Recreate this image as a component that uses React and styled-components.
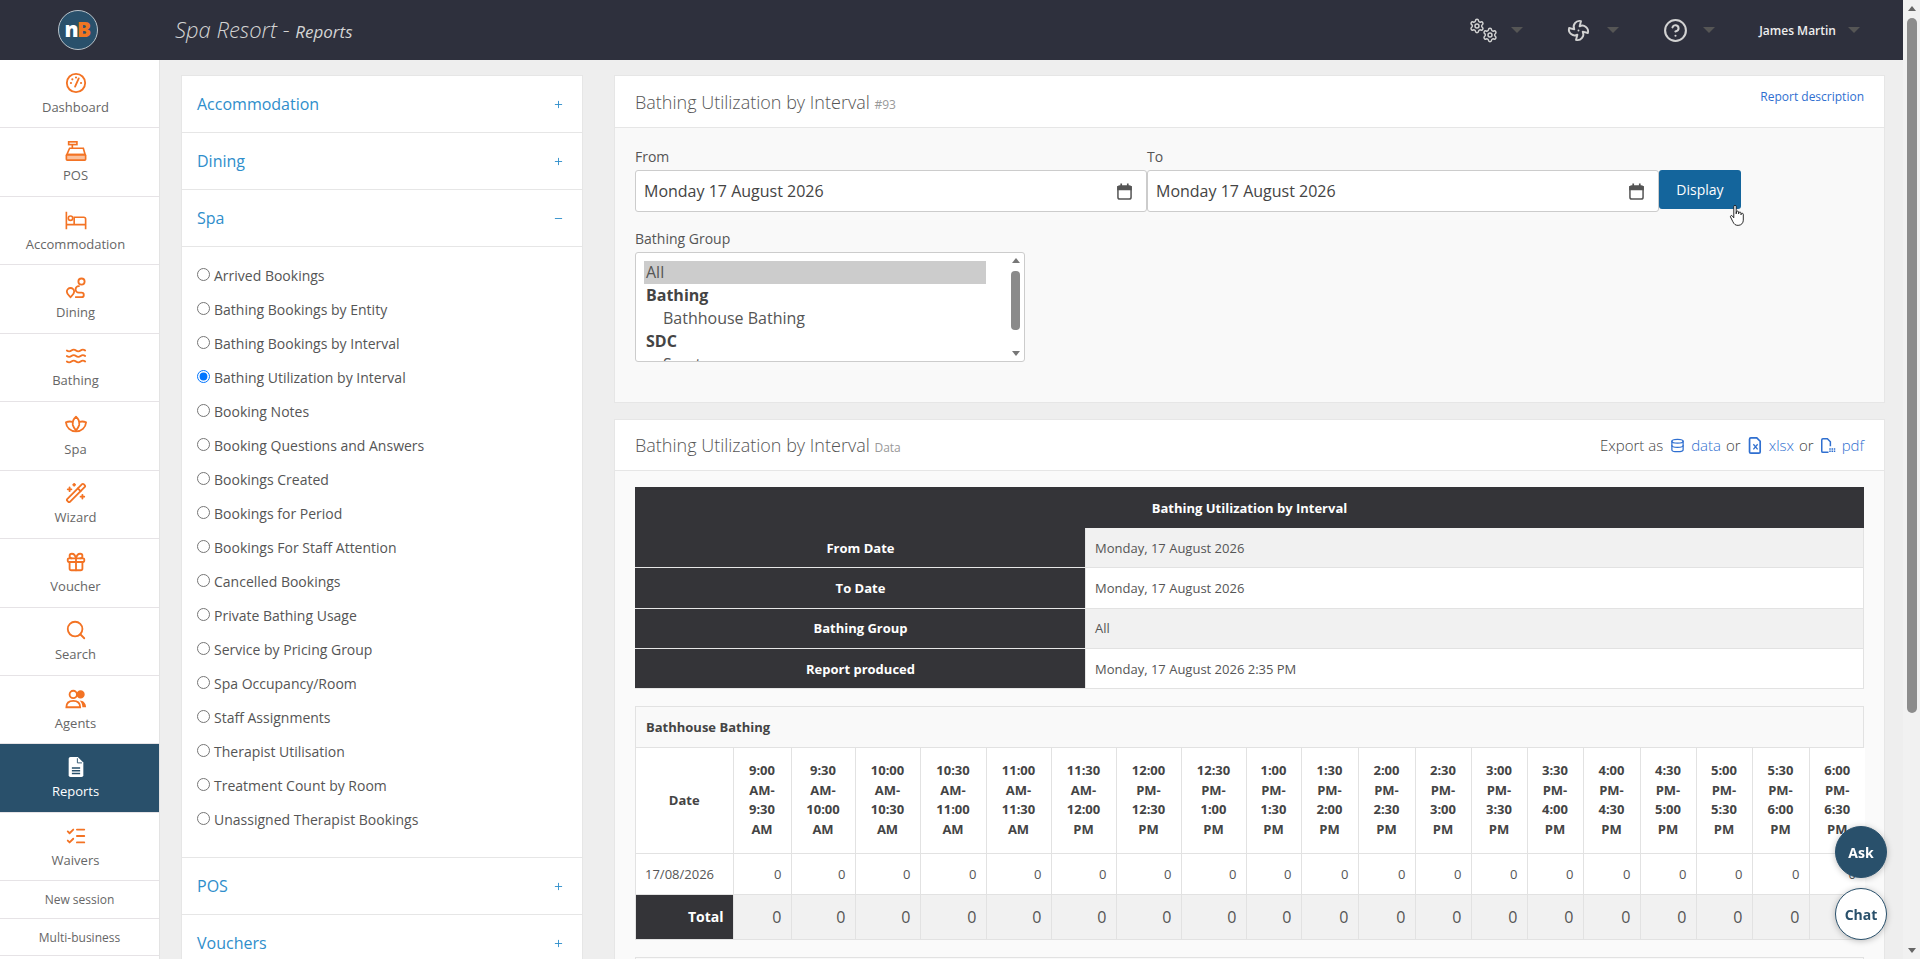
import React from 'react';
import styled, { createGlobalStyle } from 'styled-components';
import {
  Settings, Fan, CircleHelp, Waves, WandSparkles, Gift, Search, ListChecks, Database,
  ChevronUp, Plus, Minus,
} from 'lucide-react';

const GlobalStyle = createGlobalStyle`
  html, body { margin: 0; height: 100%; overflow: hidden; }
  body { font-family: "Open Sans", "Liberation Sans", sans-serif; font-size: 14px; color: #555; background: #eee; }
  #root { height: 100%; }
  * { box-sizing: border-box; }
`;

const GaugeIcon = () => (
  <svg viewBox="0 0 24 24" fill="none" stroke="currentColor" strokeWidth="2" strokeLinecap="round">
    <circle cx="12" cy="12" r="10" />
    <path d="M11 16l4-9" />
    <path d="M6.5 12h.01M8 8h.01M12 6h.01M17.5 12h.01" strokeWidth="2.4" />
  </svg>
);
const PosIcon = () => (
  <svg viewBox="0 0 24 24" fill="none" stroke="currentColor" strokeWidth="1.8">
    <rect x="4" y="2" width="9" height="3" />
    <path d="M8 5v4M5 9h15l2 7H2z" />
    <rect x="1.5" y="16" width="21" height="6" rx="1" fill="currentColor" fillOpacity=".45" />
    <path d="M7 12h.01M10 12h.01M13 12h.01M16 12h.01" strokeWidth="2" />
  </svg>
);
const BedIcon = () => (
  <svg viewBox="0 0 24 24" fill="none" stroke="currentColor" strokeWidth="1.8">
    <path d="M1.5 3v19M1.5 17h21M22.5 22V11a2 2 0 0 0-2-2H10v8" />
    <circle cx="6" cy="10" r="2.4" />
  </svg>
);
const RouteIcon = () => (
  <svg viewBox="0 0 24 24" fill="none" stroke="currentColor" strokeWidth="2">
    <path d="M6 22c-2-2-4-3.500-4-6a4 4 0 0 1 8 0c0 2.500-2 4-4 6z" />
    <circle cx="18" cy="5" r="3.400" />
    <path d="M16 10h-1a3.500 3.500 0 0 0 0 7h3a2.200 2.200 0 0 1 0 5h-7" />
  </svg>
);
const LotusIcon = () => (
  <svg viewBox="0 0 24 24" fill="none" stroke="currentColor" strokeWidth="2" strokeLinejoin="round">
    <path d="M12 3c3 2.500 4 5.500 3.500 9-.5 2-2 4-3.500 6-1.500-2-3-4-3.500-6C8 8.500 9 5.500 12 3z" />
    <path d="M8 8.500C6 8 3.500 8 1 9c.5 6 5 10 11 10s10.500-4 11-10c-2.500-1-5-1-7-.5" />
  </svg>
);
const AgentsIcon = () => (
  <svg viewBox="0 0 24 24" fill="none" stroke="currentColor" strokeWidth="2">
    <circle cx="9" cy="7" r="4" />
    <circle cx="17" cy="7" r="3.500" fill="currentColor" />
    <path d="M1.500 21c0-4.500 3-7 7.500-7s7.500 2.500 7.500 7z" />
    <path d="M16 13.500c4 0 7 3 7 7.500h-4c0-3-1-5.500-3-7.500z" fill="currentColor" stroke="none" />
  </svg>
);
const ReportIcon = () => (
  <svg viewBox="0 0 24 24" fill="none">
    <path d="M6 1h8l6 6v14a2 2 0 0 1-2 2H6a2 2 0 0 1-2-2V3a2 2 0 0 1 2-2z" fill="#fff" />
    <path d="M7.500 13h9M7.500 16h9M7.500 19h9" stroke="#29506b" strokeWidth="1.700" />
    <path d="M13.500 2.500v5h5" stroke="#29506b" strokeWidth="1" />
  </svg>
);
const CalendarIcon = () => (
  <svg viewBox="0 0 16 18" fill="none" stroke="#555" strokeWidth="1.600">
    <rect x="1" y="3" width="14" height="14" rx="2" />
    <path d="M1 3.800h14v3H1z" fill="#555" />
    <path d="M4.500 .5v3M11.500 .5v3" strokeWidth="1.800" />
  </svg>
);
const XlsxIcon = () => (
  <svg viewBox="0 0 16 20" fill="none" stroke="currentColor" strokeWidth="1.700">
    <path d="M2.500 1h7l4 4v12.500a1.500 1.500 0 0 1-1.500 1.500H2.500A1.500 1.500 0 0 1 1 17.500v-15A1.500 1.500 0 0 1 2.500 1z" />
    <path d="M5.500 8.500l5 6M10.500 8.500l-5 6" strokeWidth="1.500" />
  </svg>
);
const PdfIcon = () => (
  <svg viewBox="0 0 20 20" fill="none" stroke="currentColor" strokeWidth="1.700">
    <path d="M10 19H2.500A1.500 1.500 0 0 1 1 17.500v-15A1.500 1.500 0 0 1 2.500 1h6l4 4v6" />
    <path d="M11 14.500h8M11 17.500h8" strokeWidth="2" strokeDasharray="2 1" />
  </svg>
);
const HandCursor = () => (
  <svg viewBox="0 0 20 28" fill="#fff" stroke="#111" strokeWidth="1.100" strokeLinejoin="round">
    <path d="M6 2a1.500 1.500 0 0 1 3 0v9l.3-2.500a1.400 1.400 0 0 1 2.700.5v2l.3-1.300a1.400 1.400 0 0 1 2.700.5v2l.4-1a1.300 1.300 0 0 1 2.500.5v7.300c0 3.500-2.500 6.500-6.500 6.500-3.500 0-5-1.500-6.500-4.500l-3-6c-.7-1.500 1.300-2.500 2.300-1.300L6 16z" />
  </svg>
);

const nav = [
  { label: 'Dashboard', icon: <GaugeIcon /> },
  { label: 'POS', icon: <PosIcon /> },
  { label: 'Accommodation', icon: <BedIcon /> },
  { label: 'Dining', icon: <RouteIcon /> },
  { label: 'Bathing', icon: <Waves /> },
  { label: 'Spa', icon: <LotusIcon /> },
  { label: 'Wizard', icon: <WandSparkles /> },
  { label: 'Voucher', icon: <Gift /> },
  { label: 'Search', icon: <Search /> },
  { label: 'Agents', icon: <AgentsIcon /> },
  { label: 'Reports', icon: <ReportIcon />, active: true },
  { label: 'Waivers', icon: <ListChecks /> },
];

const spaReports = [
  'Arrived Bookings', 'Bathing Bookings by Entity', 'Bathing Bookings by Interval',
  'Bathing Utilization by Interval', 'Booking Notes', 'Booking Questions and Answers',
  'Bookings Created', 'Bookings for Period', 'Bookings For Staff Attention', 'Cancelled Bookings',
  'Private Bathing Usage', 'Service by Pricing Group', 'Spa Occupancy/Room', 'Staff Assignments',
  'Therapist Utilisation', 'Treatment Count by Room', 'Unassigned Therapist Bookings',
];

const summary = [
  ['From Date', 'Monday, 17 August 2026'],
  ['To Date', 'Monday, 17 August 2026'],
  ['Bathing Group', 'All'],
  ['Report produced', 'Monday, 17 August 2026 2:35 PM'],
];

const intervals = [
  ['9:00 AM', '9:30 AM', 58], ['9:30 AM', '10:00 AM', 64], ['10:00 AM', '10:30 AM', 65],
  ['10:30 AM', '11:00 AM', 66], ['11:00 AM', '11:30 AM', 65], ['11:30 AM', '12:00 PM', 65],
  ['12:00 PM', '12:30 PM', 65], ['12:30 PM', '1:00 PM', 65], ['1:00 PM', '1:30 PM', 55],
  ['1:30 PM', '2:00 PM', 57], ['2:00 PM', '2:30 PM', 57], ['2:30 PM', '3:00 PM', 56],
  ['3:00 PM', '3:30 PM', 56], ['3:30 PM', '4:00 PM', 56], ['4:00 PM', '4:30 PM', 57],
  ['4:30 PM', '5:00 PM', 56], ['5:00 PM', '5:30 PM', 56], ['5:30 PM', '6:00 PM', 57],
  ['6:00 PM', '6:30 PM', 56],
];

const App = () => (
  <Shell>
    <GlobalStyle />
    <Page>
      <Header>
        <LogoCell>
          <Logo viewBox="0 0 40 40">
            <circle cx="20" cy="20" r="19.500" fill="#29506b" stroke="#b9c3ca" strokeWidth="1" />
            <text x="6.500" y="27" fontFamily="Open Sans" fontWeight="800" fontSize="21" fill="#fff">n</text>
            <text x="19" y="27" fontFamily="Open Sans" fontWeight="800" fontSize="21" fill="#ef7622">B</text>
          </Logo>
        </LogoCell>
        <Title>Spa Resort - <small>Reports</small></Title>
        <HeaderTools>
          <Tool $gap={13}><Gears><Settings /><Settings /></Gears><Caret /></Tool>
          <Tool $gap={17}><FanIcon /><Caret /></Tool>
          <Tool $gap={15}><HelpIcon /><Caret /></Tool>
          <Tool $gap={12}><UserName>James Martin</UserName><Caret /></Tool>
        </HeaderTools>
      </Header>
      <Body>
        <Sidebar>
          {nav.map((item) => (
            <NavItem key={item.label} $active={item.active}>
              <NavIcon $active={item.active}>{item.icon}</NavIcon>
              {item.label}
            </NavItem>
          ))}
          <NavLink>New session</NavLink>
          <NavLink>Multi-business</NavLink>
        </Sidebar>
        <Main>
          <ReportMenu>
            <MenuHead>Accommodation<Plus /></MenuHead>
            <MenuHead>Dining<Plus /></MenuHead>
            <MenuHead>Spa<Minus /></MenuHead>
            <RadioList>
              {spaReports.map((name) => (
                <RadioRow key={name}>
                  <input type="radio" name="report" defaultChecked={name === 'Bathing Utilization by Interval'} />
                  {name}
                </RadioRow>
              ))}
            </RadioList>
            <MenuHead>POS<Plus /></MenuHead>
            <MenuHead>Vouchers<Plus /></MenuHead>
          </ReportMenu>
          <Content>
            <Panel>
              <PanelHead>
                <PanelTitle>Bathing Utilization by Interval <small>#93</small></PanelTitle>
                <DescLink>Report description</DescLink>
              </PanelHead>
              <FilterBody>
                <DateRow>
                  <DateField>
                    <FieldLabel>From</FieldLabel>
                    <DateInput>Monday 17 August 2026<CalendarIcon /></DateInput>
                  </DateField>
                  <DateField>
                    <FieldLabel>To</FieldLabel>
                    <DateInput>Monday 17 August 2026<CalendarIcon /></DateInput>
                  </DateField>
                  <DisplayButton>
                    Display
                    <CursorWrap><HandCursor /></CursorWrap>
                  </DisplayButton>
                </DateRow>
                <FieldLabel>Bathing Group</FieldLabel>
                <ListBox>
                  <ListOptions>
                    <Option $selected>All</Option>
                    <Option $group>Bathing</Option>
                    <Option $child>Bathhouse Bathing</Option>
                    <Option $group>SDC</Option>
                    <Option $child>Spa-to-go</Option>
                  </ListOptions>
                  <MiniScroll>
                    <ChevronFill />
                    <MiniThumb />
                    <ChevronFill $down />
                  </MiniScroll>
                </ListBox>
              </FilterBody>
            </Panel>
            <Panel>
              <PanelHead $tall>
                <PanelTitle>Bathing Utilization by Interval <small>Data</small></PanelTitle>
                <ExportBar>
                  Export as <ExportLink><Database />data</ExportLink> or{' '}
                  <ExportLink><XlsxIcon />xlsx</ExportLink> or{' '}
                  <ExportLink><PdfIcon />pdf</ExportLink>
                </ExportBar>
              </PanelHead>
              <DataBody>
                <SummaryTable>
                  <thead>
                    <tr><SummaryTitle colSpan={2}>Bathing Utilization by Interval</SummaryTitle></tr>
                  </thead>
                  <tbody>
                    {summary.map(([key, value], i) => (
                      <tr key={key}>
                        <SummaryKey>{key}</SummaryKey>
                        <SummaryValue $odd={i % 2 === 0}>{value}</SummaryValue>
                      </tr>
                    ))}
                  </tbody>
                </SummaryTable>
                <GridPanel>
                  <GridHead>Bathhouse Bathing</GridHead>
                  <GridTable>
                    <colgroup>
                      <col width={97} />
                      {intervals.map(([from, , w]) => <col key={from} width={w} />)}
                    </colgroup>
                    <thead>
                      <tr>
                        <HeadCell>Date</HeadCell>
                        {intervals.map(([from, to]) => <HeadCell key={from}>{from}-{to}</HeadCell>)}
                      </tr>
                    </thead>
                    <tbody>
                      <tr>
                        <DateCell>17/08/2026</DateCell>
                        {intervals.map(([from]) => <NumCell key={from}>0</NumCell>)}
                      </tr>
                      <tr>
                        <TotalLabel>Total</TotalLabel>
                        {intervals.map(([from]) => <TotalCell key={from}>0</TotalCell>)}
                      </tr>
                    </tbody>
                  </GridTable>
                </GridPanel>
                <NextPanel />
              </DataBody>
            </Panel>
          </Content>
        </Main>
      </Body>
    </Page>
    <PageScroll>
      <ScrollArrow />
      <PageThumb />
      <ScrollArrow $down />
    </PageScroll>
    <Floating>
      <RoundButton>Ask</RoundButton>
      <RoundButton $outline>Chat</RoundButton>
    </Floating>
  </Shell>
);

const Shell = styled.div`
  display: flex;
  height: 100vh;
  overflow: hidden;
`;

const Page = styled.div`
  flex: 1;
  min-width: 0;
  display: flex;
  flex-direction: column;
`;

const Header = styled.header`
  height: 60px;
  flex: none;
  display: flex;
  align-items: center;
  background: #2e303d;
  color: #ccc;
`;

const LogoCell = styled.div`
  width: 175px;
  padding-left: 58px;
  display: flex;
`;

const Logo = styled.svg`
  width: 40px;
  height: 40px;
`;

const Title = styled.div`
  font-size: 22px;
  font-style: italic;
  font-weight: 300;
  color: #d4d4d4;
  margin-top: -2px;

  small {
    font-size: 17px;
    font-weight: 400;
  }
`;

const HeaderTools = styled.div`
  margin-left: auto;
  padding-right: 43px;
  display: flex;
  align-items: center;
  gap: 44px;
`;

const Tool = styled.div`
  display: flex;
  align-items: center;
  gap: ${(p) => p.$gap}px;
`;

const Gears = styled.div`
  display: flex;
  height: 24px;
  color: #d2d2d2;

  svg {
    width: 16px;
    height: 16px;
    stroke-width: 2.200;
  }

  svg + svg {
    margin: 9px 0 0 -3px;
  }
`;

const FanIcon = styled(Fan)`
  width: 23px;
  height: 23px;
  color: #d2d2d2;
`;

const HelpIcon = styled(CircleHelp)`
  width: 25px;
  height: 25px;
  color: #d2d2d2;
`;

const UserName = styled.span`
  font-size: 12px;
  font-weight: 600;
  color: #eee;
`;

const Caret = styled.span`
  width: 0;
  height: 0;
  border-left: 6px solid transparent;
  border-right: 6px solid transparent;
  border-top: 6px solid #555;
`;

const Body = styled.div`
  flex: 1;
  min-height: 0;
  display: flex;
`;

const Sidebar = styled.nav`
  width: 160px;
  flex: none;
  background: #fff;
  border-right: 1px solid #e3e3e3;
  overflow: hidden;
`;

const NavItem = styled.div`
  height: 68.450px;
  display: flex;
  flex-direction: column;
  align-items: center;
  justify-content: center;
  gap: 4px;
  padding-right: 8px;
  font-size: 13px;
  line-height: 18px;
  color: ${(p) => (p.$active ? '#fff' : '#666')};
  background: ${(p) => (p.$active ? '#29506b' : '#fff')};
  border-bottom: 1px solid #e6e3e6;
`;

const NavIcon = styled.span`
  width: 22px;
  height: 22px;
  color: ${(p) => (p.$active ? '#fff' : '#f37324')};

  svg {
    display: block;
    width: 22px;
    height: 22px;
  }
`;

const NavLink = styled.div`
  height: 37.500px;
  display: flex;
  align-items: center;
  justify-content: center;
  font-size: 12px;
  color: #666;
  border-bottom: 1px solid #e6e3e6;
`;

const Main = styled.main`
  flex: 1;
  min-width: 0;
  display: flex;
  align-items: flex-start;
  gap: 31px;
  padding: 15px 18px 0 21px;
  overflow: hidden;
`;

const ReportMenu = styled.aside`
  width: 402px;
  flex: none;
  background: #fff;
  border: 1px solid #e6e6e6;
`;

const MenuHead = styled.div`
  height: 57px;
  display: flex;
  align-items: center;
  justify-content: space-between;
  padding: 0 18px 0 15px;
  font-size: 16px;
  color: #2f8ecb;
  border-bottom: 1px solid #e6e6e6;

  svg {
    width: 11px;
    height: 11px;
  }
`;

const RadioList = styled.div`
  padding: 11px 15px 21px;
  border-bottom: 1px solid #e6e6e6;
`;

const RadioRow = styled.label`
  height: 34px;
  display: flex;
  align-items: center;
  gap: 4px;
  font-size: 14px;
  color: #555;

  input {
    width: 13px;
    height: 13px;
    margin: -2px 0 0;
  }
`;

const Content = styled.div`
  flex: 1;
  min-width: 0;
  display: flex;
  flex-direction: column;
  gap: 16px;
`;

const Panel = styled.section`
  background: #fff;
  border: 1px solid #e6e6e6;
`;

const PanelHead = styled.div`
  height: ${(p) => (p.$tall ? 51 : 52)}px;
  display: flex;
  align-items: center;
  justify-content: space-between;
  padding: 0 20px;
  border-bottom: 1px solid #e6e6e6;
`;

const PanelTitle = styled.h2`
  margin: 0;
  font-size: 18px;
  font-weight: 300;
  color: #555;

  small {
    font-size: 12px;
    font-weight: 400;
    color: #999;
  }
`;

const DescLink = styled.a`
  font-size: 12px;
  color: #2f6fd0;
  align-self: flex-start;
  margin-top: 12px;
`;

const FilterBody = styled.div`
  height: 274px;
  padding: 19px 20px 0;
  background: #f9f9f9;
`;

const DateRow = styled.div`
  display: flex;
  align-items: flex-end;
  margin-bottom: 17px;
`;

const DateField = styled.div`
  width: 512px;
`;

const FieldLabel = styled.div`
  font-size: 14px;
  line-height: 19px;
  margin-bottom: 4px;
  color: #555;
`;

const DateInput = styled.div`
  height: 42px;
  display: flex;
  align-items: center;
  justify-content: space-between;
  padding: 0 14px 0 8px;
  font-size: 16px;
  color: #444;
  background: #fff;
  border: 1px solid #ccc;
  border-radius: 3px;

  svg {
    width: 15px;
    height: 17px;
  }
`;

const DisplayButton = styled.div`
  position: relative;
  width: 82px;
  height: 39px;
  margin-bottom: 3px;
  display: flex;
  align-items: center;
  justify-content: center;
  font-size: 14px;
  color: #fff;
  background: #14659c;
  border-radius: 3px;
`;

const CursorWrap = styled.span`
  position: absolute;
  left: 70px;
  top: 35px;
  width: 16px;
  height: 24px;

  svg {
    display: block;
  }
`;

const ListBox = styled.div`
  width: 390px;
  height: 110px;
  display: flex;
  justify-content: space-between;
  overflow: hidden;
  background: #fff;
  border: 1px solid #ccc;
  border-radius: 3px;
`;

const ListOptions = styled.div`
  width: 342px;
  margin: 8px 0 0 8px;
`;

const Option = styled.div`
  height: 23px;
  line-height: 23px;
  font-size: 16px;
  padding-left: ${(p) => (p.$child ? 19 : 2)}px;
  font-weight: ${(p) => (p.$group ? 700 : 400)};
  color: #555;
  color: ${(p) => (p.$group ? '#444' : '#555')};
  background: ${(p) => (p.$selected ? '#ccc' : 'transparent')};
`;

const MiniScroll = styled.div`
  width: 15px;
  margin-right: 1px;
  display: flex;
  flex-direction: column;
  align-items: center;
  justify-content: space-between;
  padding: 5px 0;
`;

const ChevronFill = styled.span`
  width: 0;
  height: 0;
  border-left: 4px solid transparent;
  border-right: 4px solid transparent;
  ${(p) => (p.$down ? 'border-top: 5px solid #777;' : 'border-bottom: 5px solid #777;')}
`;

const MiniThumb = styled.span`
  width: 9px;
  height: 59px;
  margin-bottom: 14px;
  border-radius: 4px;
  background: #8a8a8a;
`;

const ExportBar = styled.div`
  display: flex;
  align-items: center;
  gap: 5px;
  font-size: 15px;
  font-weight: 300;
  color: #444;
`;

const ExportLink = styled.a`
  display: inline-flex;
  align-items: center;
  gap: 6px;
  margin-left: 2px;
  color: #2f6fd0;

  svg {
    width: 15px;
    height: 17px;
    stroke-width: 2;
  }
`;

const DataBody = styled.div`
  padding: 16px 20px 0;
  background: #fafafa;
`;

const SummaryTable = styled.table`
  width: 100%;
  border-collapse: collapse;
  font-size: 13px;
`;

const SummaryTitle = styled.th`
  height: 40px;
  color: #fff;
  background: #343438;
  border: 1px solid #343438;
`;

const SummaryKey = styled.th`
  width: 450px;
  height: 40.300px;
  color: #fff;
  background: #343438;
  border: 1px solid #e6e6e6;
  border-left-color: #343438;
`;

const SummaryValue = styled.td`
  padding: 0 9px;
  color: #555;
  background: ${(p) => (p.$odd ? '#f1f1f1' : '#fff')};
  border: 1px solid #e2e2e2;
`;

const GridPanel = styled.div`
  margin-top: 17px;
  border: 1px solid #e2e2e2;
  border-bottom: 0;
`;

const GridHead = styled.div`
  height: 41px;
  display: flex;
  align-items: center;
  padding-left: 10px;
  font-size: 13px;
  font-weight: 700;
  color: #444;
  background: #f9f9f9;
  border-bottom: 1px solid #e2e2e2;
`;

const GridTable = styled.table`
  width: 100%;
  table-layout: fixed;
  border-collapse: collapse;
  font-size: 13px;
  background: #fff;

  th:first-child, td:first-child { border-left: 0; }
  th:last-child, td:last-child { border-right: 0; }
`;

const HeadCell = styled.th`
  height: 105px;
  padding: 12px 8px;
  line-height: 19.500px;
  font-weight: 700;
  color: #444;
  border: 1px solid #e2e2e2;
  border-top: 0;
`;

const DateCell = styled.td`
  height: 41px;
  padding: 0 9px;
  color: #555;
  white-space: nowrap;
  border: 1px solid #e2e2e2;
`;

const NumCell = styled.td`
  padding: 0 9px;
  text-align: right;
  color: #555;
  border: 1px solid #e2e2e2;
`;

const TotalLabel = styled.td`
  height: 45px;
  padding: 0 9px;
  text-align: right;
  font-size: 14px;
  font-weight: 700;
  color: #fff;
  background: #343438;
  border-bottom: 1px solid #e2e2e2;
`;

const TotalCell = styled.td`
  padding: 0 9px;
  text-align: right;
  font-size: 16px;
  color: #555;
  background: #f1f1f1;
  border: 1px solid #e2e2e2;
`;

const NextPanel = styled.div`
  height: 60px;
  margin-top: 17px;
  background: #f9f9f9;
  border: 1px solid #e2e2e2;
`;

const PageScroll = styled.div`
  width: 17px;
  flex: none;
  display: flex;
  flex-direction: column;
  align-items: center;
  background: #f1f1f1;
`;

const ScrollArrow = styled.span`
  width: 0;
  height: 0;
  margin: 6px 0;
  border-left: 4px solid transparent;
  border-right: 4px solid transparent;
  ${(p) => (p.$down ? 'border-top: 5px solid #666; margin-top: auto;' : 'border-bottom: 5px solid #666;')}
`;

const PageThumb = styled.span`
  width: 10px;
  height: 695px;
  margin-top: 1px;
  border-radius: 5px;
  background: #8c8c8c;
`;

const Floating = styled.div`
  position: fixed;
  right: 33px;
  bottom: 19px;
  display: flex;
  flex-direction: column;
  gap: 10px;
`;

const RoundButton = styled.div`
  width: 52px;
  height: 52px;
  display: flex;
  align-items: center;
  justify-content: center;
  border-radius: 50%;
  font-size: 14px;
  font-weight: 700;
  color: ${(p) => (p.$outline ? '#29506b' : '#fff')};
  background: ${(p) => (p.$outline ? '#fff' : '#29506b')};
  border: 1px solid #29506b;
  box-shadow: 0 1px 6px rgba(0, 0, 0, 0.25);
`;

export default App;
